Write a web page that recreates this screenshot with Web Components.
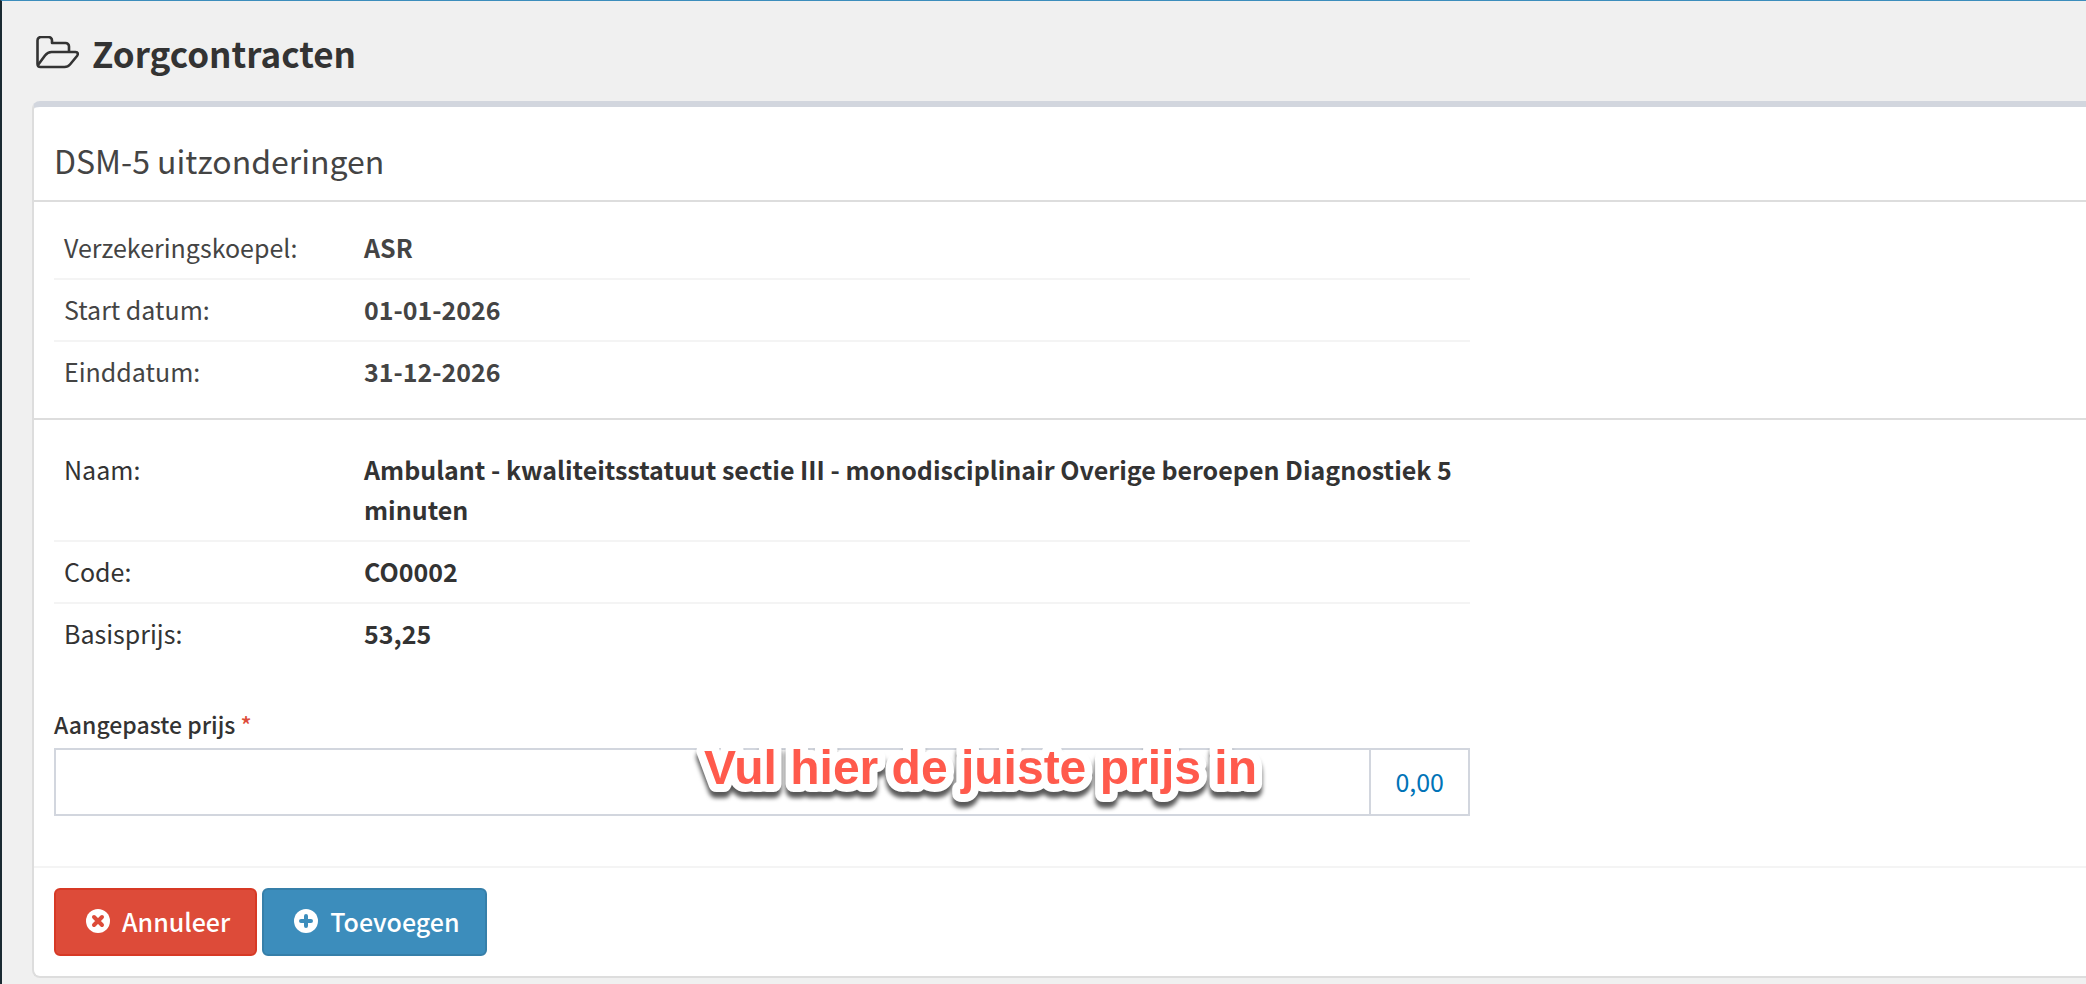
<!DOCTYPE html>
<html lang="nl">
<head>
<meta charset="utf-8">
<meta name="viewport" content="width=device-width, initial-scale=1">
<title>Zorgcontracten</title>
<style>
  body {
    margin: 0;
    min-height: 100vh;
    box-sizing: border-box;
    border-top: 1px solid #3c8dbc;
    border-left: 2px solid #1a2a32;
    background: #f0f0f0;
    color: #333;
    font: 25px/40px "Noto Sans CJK SC", "Noto Sans", sans-serif;
    overflow-x: hidden;
  }
</style>
</head>
<body>
  <page-heading>Zorgcontracten</page-heading>

  <content-box>
    <span slot="title">DSM-5 uitzonderingen</span>
    <box-section muted>
      <detail-table id="contract"></detail-table>
    </box-section>
    <box-section>
      <detail-table id="product"></detail-table>
      <price-field label="Aangepaste prijs" value="0,00">
        <callout-text text="Vul hier de juiste prijs in"></callout-text>
      </price-field>
    </box-section>
    <action-button slot="footer" type="danger">Annuleer</action-button>
    <action-button slot="footer" type="primary">Toevoegen</action-button>
  </content-box>

<script>
class PageHeading extends HTMLElement {
  constructor() {
    super();
    this.attachShadow({ mode: "open" });

    this.shadowRoot.innerHTML = /*html*/ `
      <style>
        :host {
          display: block;
          padding: 28px 30px 24px 34px;
        }

        h1 {
          display: flex;
          align-items: center;
          gap: 12px;
          margin: 0;
          font-size: 35px;
          font-weight: 600;
          line-height: 48px;
        }

        svg {
          flex: none;
          width: 44px;
          height: 34px;
        }
      </style>

      <h1>
        <svg viewBox="0 0 44 34" fill="none" stroke="currentColor" stroke-width="2.6" stroke-linejoin="round" aria-hidden="true">
          <path d="M1.500 28V4.500a3.500 3.500 0 0 1 3.500-3.500h7.500a3.500 3.500 0 0 1 3.500 3.500v2.500h13.500a3.500 3.500 0 0 1 3.500 3.500v5.500"/>
          <path d="M2 29L9 19.500C11 17 12.500 16 15.500 16H39.500C42 16 42.500 18 41 20L34 28.500C32.300 30.600 31 31 28.500 31H4.500C2.500 31 1.500 30 1.500 28"/>
        </svg>
        <slot></slot>
      </h1>
    `;
  }
}

class ContentBox extends HTMLElement {
  constructor() {
    super();
    this.attachShadow({ mode: "open" });

    this.shadowRoot.innerHTML = /*html*/ `
      <style>
        :host {
          display: block;
          margin-left: 30px;
          border: 2px solid #ddd;
          border-top: 6px solid #d2d6de;
          border-right: none;
          border-radius: 8px 0 0 8px;
          background: #fff;
        }

        h2 {
          margin: 0;
          padding: 29px 20px 16px;
          color: #444;
          font-size: 32px;
          font-weight: 400;
          line-height: 48px;
        }

        footer {
          display: flex;
          gap: 5px;
          padding: 20px;
          border-top: 2px solid #f4f4f4;
        }
      </style>

      <h2><slot name="title"></slot></h2>
      <slot></slot>
      <footer><slot name="footer"></slot></footer>
    `;
  }
}

class BoxSection extends HTMLElement {
  constructor() {
    super();
    this.attachShadow({ mode: "open" });

    this.shadowRoot.innerHTML = /*html*/ `
      <style>
        :host {
          display: block;
          padding: 16px 20px;
          border-top: 2px solid #ddd;
        }

        :host([muted]) {
          color: #444;
        }

        :host(:not([muted])) {
          padding: 20px 20px 50px;
        }

        .column {
          max-width: 1416px;
        }
      </style>

      <div class="column"><slot></slot></div>
    `;
  }
}

class DetailTable extends HTMLElement {
  constructor() {
    super();
    this.attachShadow({ mode: "open" });

    this.shadowRoot.innerHTML = /*html*/ `
      <style>
        :host {
          display: block;
        }

        table {
          width: 100%;
          border-spacing: 0;
          table-layout: fixed;
        }

        th, td {
          padding: 9px 10px 11px;
          text-align: left;
          vertical-align: top;
        }

        th {
          width: 280px;
          font-weight: 400;
        }

        td {
          font-weight: 700;
        }

        tr + tr > * {
          border-top: 2px solid #f4f4f4;
        }
      </style>

      <table><tbody></tbody></table>
    `;
  }

  set rows(rows) {
    const body = this.shadowRoot.querySelector("tbody");
    body.replaceChildren();

    rows.forEach(([name, value]) => {
      const row = body.insertRow();
      const header = document.createElement("th");
      header.scope = "row";
      header.textContent = name;
      row.append(header);
      row.insertCell().textContent = value;
    });
  }
}

class PriceField extends HTMLElement {
  constructor() {
    super();
    this.attachShadow({ mode: "open" });

    this.shadowRoot.innerHTML = /*html*/ `
      <style>
        :host {
          display: block;
          margin-top: 40px;
        }

        label {
          display: block;
          padding-bottom: 4px;
          font-size: 23px;
          font-weight: 500;
        }

        .required {
          color: #dd4b39;
        }

        .group {
          position: relative;
          display: flex;
          border: 2px solid #d2d6de;
        }

        input {
          flex: 1;
          min-width: 0;
          height: 64px;
          box-sizing: border-box;
          padding: 12px 24px;
          border: none;
          background: #fff;
          color: #555;
          font: inherit;
        }

        output {
          padding: 11px 24px 13px;
          border-left: 2px solid #d2d6de;
          color: #0073b7;
        }
      </style>

      <label for="price"><span class="text"></span> <span class="required">*</span></label>
      <div class="group">
        <input id="price" type="text" inputmode="decimal" required>
        <output for="price"></output>
        <slot></slot>
      </div>
    `;
  }

  connectedCallback() {
    this.shadowRoot.querySelector(".text").textContent = this.getAttribute("label");
    this.shadowRoot.querySelector("output").textContent = this.getAttribute("value");
  }
}

class CalloutText extends HTMLElement {
  constructor() {
    super();
    this.attachShadow({ mode: "open" });

    // lies over the input, the halo stops at the top edge of it
    this.shadowRoot.innerHTML = /*html*/ `
      <style>
        :host {
          position: absolute;
          top: -22px;
          left: 45%;
          clip-path: inset(20px 0 0);
          pointer-events: none;
        }

        svg {
          display: block;
          width: 580px;
          height: 90px;
        }

        text {
          fill: #ff5a4c;
          stroke: #fff;
          stroke-width: 16px;
          stroke-linejoin: round;
          paint-order: stroke;
          font: bold 48px "Liberation Sans", Arial, sans-serif;
          filter: drop-shadow(0 6px 2px rgba(0, 0, 0, 0.65));
        }
      </style>

      <svg><text x="13" y="56"></text></svg>
    `;
  }

  connectedCallback() {
    this.shadowRoot.querySelector("text").textContent = this.getAttribute("text");
  }
}

class ActionButton extends HTMLElement {
  constructor() {
    super();
    this.attachShadow({ mode: "open" });

    this.shadowRoot.innerHTML = /*html*/ `
      <style>
        :host {
          display: block;
        }

        button {
          display: flex;
          align-items: center;
          gap: 12px;
          padding: 11px 25px 13px 30px;
          border: 2px solid #367fa9;
          border-radius: 6px;
          background: #3c8dbc;
          color: #fff;
          font: inherit;
          font-weight: 500;
          cursor: pointer;
        }

        :host([type="danger"]) button {
          border-color: #d73925;
          background: #dd4b39;
        }

        svg {
          width: 24px;
          height: 24px;
        }
      </style>

      <button type="button">
        <svg viewBox="0 0 24 24" aria-hidden="true">
          <circle cx="12" cy="12" r="12" fill="#fff"/>
          <path fill="none" stroke-width="4" stroke-linecap="round"/>
        </svg>
        <slot></slot>
      </button>
    `;
  }

  connectedCallback() {
    const danger = this.getAttribute("type") === "danger";
    const path = this.shadowRoot.querySelector("path");
    path.setAttribute("d", danger ? "M8 8l8 8M16 8l-8 8" : "M12 7v10M7 12h10");
    path.setAttribute("stroke", danger ? "#dd4b39" : "#3c8dbc");
  }
}

customElements.define("page-heading", PageHeading);
customElements.define("content-box", ContentBox);
customElements.define("box-section", BoxSection);
customElements.define("detail-table", DetailTable);
customElements.define("price-field", PriceField);
customElements.define("callout-text", CalloutText);
customElements.define("action-button", ActionButton);

document.querySelector("#contract").rows = [
  ["Verzekeringskoepel:", "ASR"],
  ["Start datum:", "01-01-2026"],
  ["Einddatum:", "31-12-2026"],
];

document.querySelector("#product").rows = [
  ["Naam:", "Ambulant - kwaliteitsstatuut sectie III - monodisciplinair Overige beroepen Diagnostiek 5 minuten"],
  ["Code:", "CO0002"],
  ["Basisprijs:", "53,25"],
];
</script>
</body>
</html>
